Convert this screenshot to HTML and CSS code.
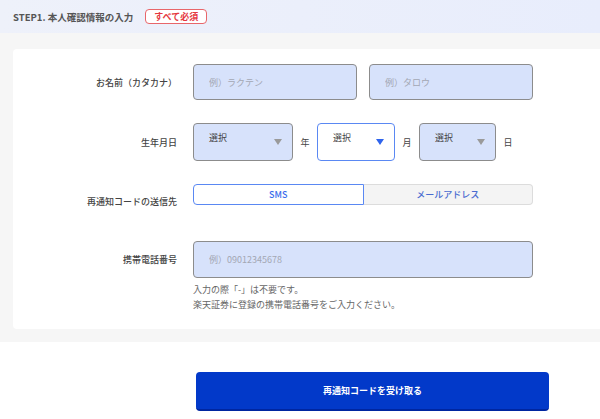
FILE: index.html
```html
<!DOCTYPE html>
<html lang="ja">
<head>
  <meta charset="UTF-8">
  <meta name="viewport" content="width=device-width, initial-scale=1.0">
  <title>本人確認情報の入力</title>
  <link rel="stylesheet" href="styles.css">
</head>
<body>
  <!-- Step header -->
  <header class="step-head">
    <h2 class="step-title">STEP1. 本人確認情報の入力</h2>
    <span class="badge">すべて必須</span>
  </header>

  <section class="form-area">
    <div class="card">
      <!-- Name -->
      <div class="row">
        <div class="label">お名前（カタカナ）</div>
        <div class="name-fields">
          <input class="text-input" type="text" placeholder="例）ラクテン">
          <input class="text-input" type="text" placeholder="例）タロウ">
        </div>
      </div>

      <!-- Birthday -->
      <div class="row">
        <div class="label label-tall">生年月日</div>
        <div class="date-fields">
          <div class="select select-year">選択<span class="arrow"></span></div>
          <span class="unit">年</span>
          <div class="select select-month is-focus">選択<span class="arrow"></span></div>
          <span class="unit">月</span>
          <div class="select select-day">選択<span class="arrow"></span></div>
          <span class="unit">日</span>
        </div>
      </div>

      <!-- Send to -->
      <div class="row">
        <div class="label label-toggle">再通知コードの送信先</div>
        <div class="toggle">
          <button class="toggle-btn is-active">SMS</button>
          <button class="toggle-btn">メールアドレス</button>
        </div>
      </div>

      <!-- Phone -->
      <div class="row">
        <div class="label label-phone">携帯電話番号</div>
        <div class="phone-field">
          <input class="text-input phone-input" type="text" placeholder="例）09012345678">
          <p class="hint">入力の際「-」は不要です。</p>
          <p class="hint">楽天証券に登録の携帯電話番号をご入力ください。</p>
        </div>
      </div>
    </div>
  </section>

  <div class="actions">
    <button class="submit">再通知コードを受け取る</button>
  </div>
</body>
</html>
```

FILE: styles.css
```css
* {
  box-sizing: border-box;
}
body {
  margin: 0;
  width: 600px;
  overflow: hidden;
  background: #fff;
  color: #444;
  font-family: "Noto Sans CJK JP", "Noto Sans", sans-serif;
  font-size: 9px;
}
.step-head {
  height: 33px;
  display: flex;
  align-items: center;
  padding-left: 13px;
  background: linear-gradient(90deg, #eef1fa, #e8edfc);
}
.step-title {
  margin: 0;
  font-size: 9.5px;
  font-weight: 700;
  color: #555;
}
.badge {
  margin-left: 12px;
  height: 15px;
  padding: 0 8px;
  display: flex;
  align-items: center;
  border: 1px solid #e8666a;
  border-radius: 4px;
  background: #fff;
  color: #e5393f;
  font-size: 9px;
  font-weight: 700;
}
.form-area {
  background: #f6f6f6;
  padding: 16px 0 13px 13px;
}
.card {
  background: #fff;
  border-radius: 4px;
  margin-right: -20px;
  padding: 15px 0 17px;
  display: flex;
  flex-direction: column;
  gap: 23px;
}
.row {
  display: grid;
  grid-template-columns: 164px 340px;
  column-gap: 16px;
  align-items: start;
}
.label {
  min-height: 36px;
  display: flex;
  align-items: center;
  justify-content: flex-end;
  font-weight: 500;
  color: #444;
}
.label-tall { min-height: 38px; }
.label-toggle { min-height: 34px; }
.label-phone { min-height: 37px; }
.name-fields {
  display: flex;
  gap: 12px;
}
.text-input {
  width: 164px;
  height: 36px;
  padding: 0 15px;
  background: #d7e2fb;
  border: 1.5px solid #8c8c8c;
  border-radius: 4px;
  font-family: inherit;
  font-size: 9px;
  color: #333;
}
.text-input::placeholder {
  color: #a3a7b3;
}
.date-fields {
  display: flex;
  align-items: center;
  gap: 7px;
}
.select {
  height: 38px;
  padding: 7px 10px 0 15px;
  display: flex;
  justify-content: space-between;
  align-items: flex-start;
  background: #d7e2fb;
  border: 1.5px solid #8c8c8c;
  border-radius: 4px;
  color: #444;
}
.select-year { width: 100px; }
.select-month { width: 78px; }
.select-day { width: 77px; }
.unit {
  width: 10px;
  text-align: center;
  color: #444;
}
.arrow {
  margin-top: 8px;
  width: 0;
  height: 0;
  border-left: 4px solid transparent;
  border-right: 4px solid transparent;
  border-top: 6px solid #9a9a9a;
}
.select.is-focus {
  background: #fff;
  border-color: #5a88f3;
}
.select.is-focus .arrow {
  border-top-color: #2f64ec;
}
.toggle {
  display: flex;
  height: 21px;
}
.toggle-btn {
  flex: 1;
  margin: 0;
  padding: 0;
  font-family: inherit;
  font-size: 9px;
  font-weight: 500;
  color: #4a6cd0;
  background: #f4f4f4;
  border: 1px solid #dcdcdc;
  border-left: none;
  border-radius: 0 4px 4px 0;
}
.toggle-btn.is-active {
  background: #fff;
  color: #3c6cec;
  border: 1.5px solid #5a88f3;
  border-radius: 4px 0 0 4px;
}
.phone-input {
  width: 340px;
  height: 37px;
}
.hint {
  margin: 0;
  line-height: 14.5px;
  color: #666;
}
.phone-field .phone-input {
  margin-bottom: 5px;
}
.actions {
  padding: 30px 0 0 196px;
}
.submit {
  width: 353px;
  height: 39px;
  background: #0239c9;
  border: none;
  border-bottom: 2px solid #0026a0;
  border-radius: 4px;
  color: #fff;
  font-family: inherit;
  font-size: 9px;
  font-weight: 700;
}
```
